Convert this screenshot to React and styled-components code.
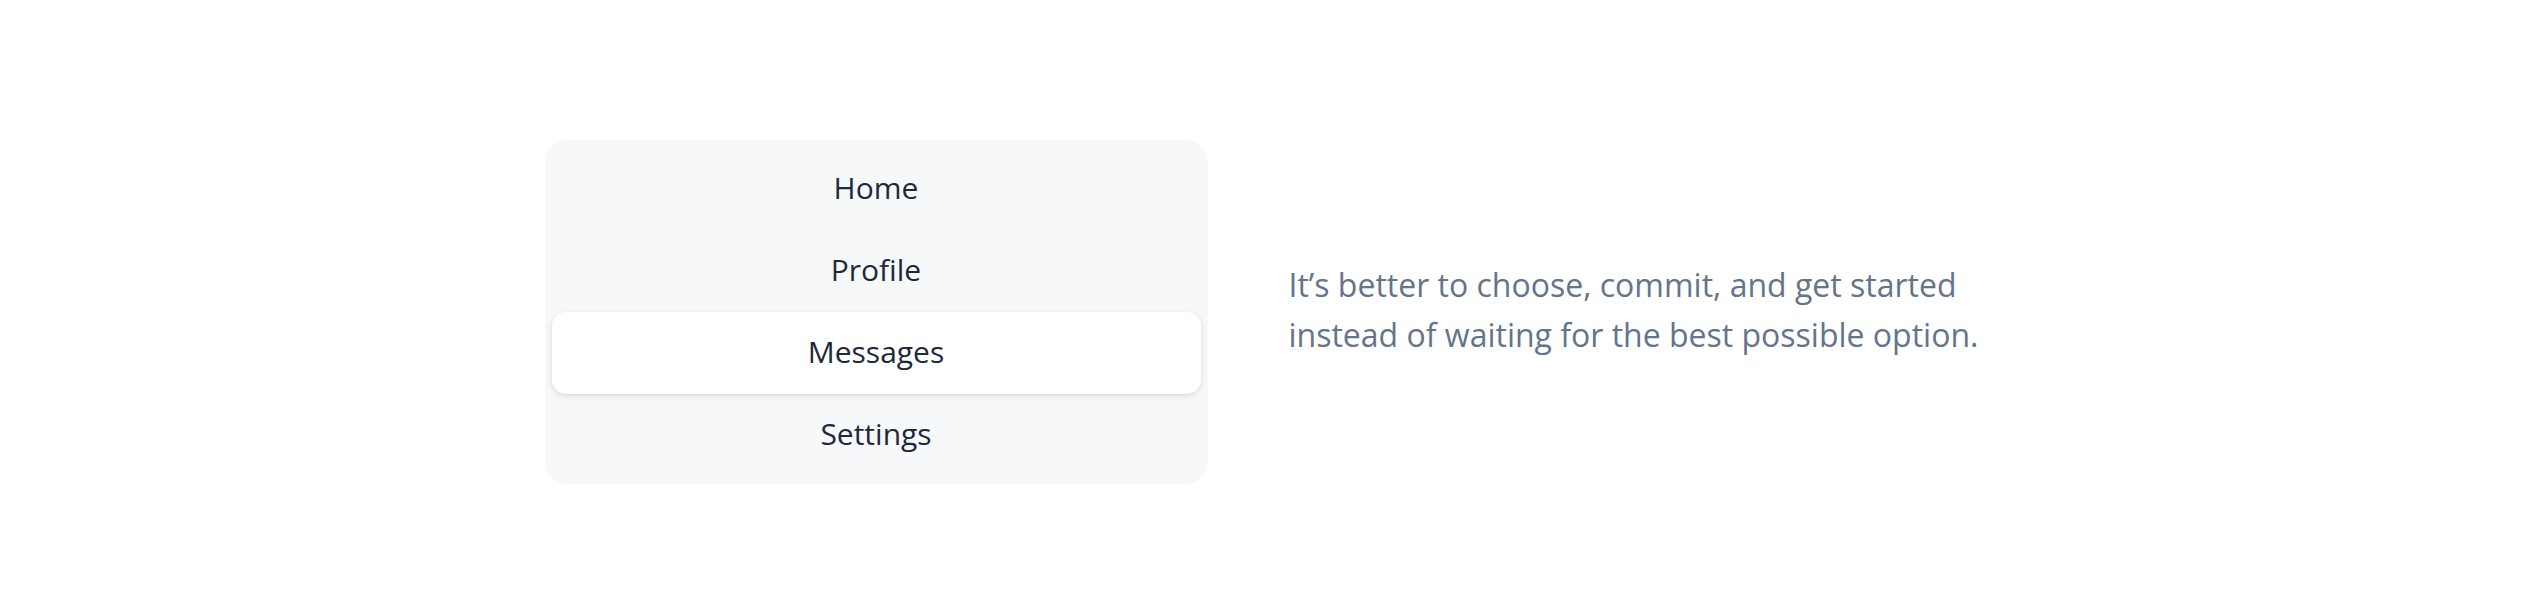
import styled, { createGlobalStyle } from "styled-components";

const GlobalStyle = createGlobalStyle`
  html, body {
    margin: 0;
    padding: 0;
    background: #ffffff;
    font-family: "Open Sans", "Liberation Sans", sans-serif;
  }
`;

const Page = styled.div`
  width: 2528px;
  height: 590px;
  box-sizing: border-box;
  padding: 140px 0 0 5px;
  display: flex;
  justify-content: center;
  align-items: flex-start;
`;

const Row = styled.div`
  display: flex;
  align-items: center;
  gap: 81px;
`;

const Menu = styled.nav`
  width: 663px;
  box-sizing: border-box;
  padding: 8px 7px;
  background: #f7f8fa;
  border-radius: 22px;
  display: flex;
  flex-direction: column;
`;

const Item = styled.div`
  height: 82px;
  box-sizing: border-box;
  padding-bottom: 3px;
  display: flex;
  align-items: center;
  justify-content: center;
  font-size: 30px;
  color: #1e293b;
  border-radius: 14px;
  background: ${(p) => (p.$active ? "#ffffff" : "transparent")};
  box-shadow: ${(p) =>
    p.$active
      ? "0 2px 7px rgba(15, 23, 42, 0.11), 0 1px 2px rgba(15, 23, 42, 0.05)"
      : "none"};
`;

const Quote = styled.p`
  margin: 0;
  width: 700px;
  padding-bottom: 4px;
  font-size: 32px;
  line-height: 50px;
  color: #64748b;
`;

const items = ["Home", "Profile", "Messages", "Settings"];

export default function App() {
  return (
    <>
      <GlobalStyle />
      <Page>
        <Row>
          <Menu>
            {items.map((label) => (
              <Item key={label} $active={label === "Messages"}>
                {label}
              </Item>
            ))}
          </Menu>
          <Quote>
            It’s better to choose, commit, and get started instead of waiting
            for the best possible option.
          </Quote>
        </Row>
      </Page>
    </>
  );
}
